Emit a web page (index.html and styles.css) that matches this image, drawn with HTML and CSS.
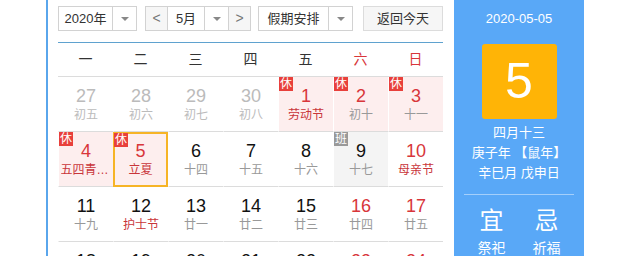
FILE: index.html
```html
<!DOCTYPE html>
<html lang="zh-CN">
<head>
    <meta charset="UTF-8">
    <title>万年历</title>
    <link rel="stylesheet" href="styles.css">
</head>
<body>
    <div class="calendar">
        <div class="main">
            <div class="toolbar">
                <div class="select year-select">
                    <span class="select-text">2020年</span>
                    <span class="select-arrow"></span>
                </div>
                <div class="month-group">
                    <span class="step-button">&lt;</span>
                    <div class="select month-select">
                        <span class="select-text">5月</span>
                        <span class="select-arrow"></span>
                    </div>
                    <span class="step-button">&gt;</span>
                </div>
                <div class="select holiday-select">
                    <span class="select-text">假期安排</span>
                    <span class="select-arrow"></span>
                </div>
                <span class="today-button">返回今天</span>
            </div>

            <div class="week-header">
                <span>一</span><span>二</span><span>三</span><span>四</span><span>五</span>
                <span class="weekend">六</span><span class="weekend">日</span>
            </div>

            <div class="days">
                <div class="day other"><span class="num">27</span><span class="lunar">初五</span></div>
                <div class="day other"><span class="num">28</span><span class="lunar">初六</span></div>
                <div class="day other"><span class="num">29</span><span class="lunar">初七</span></div>
                <div class="day other"><span class="num">30</span><span class="lunar">初八</span></div>
                <div class="day rest red"><i class="badge">休</i><span class="num">1</span><span class="lunar fest">劳动节</span></div>
                <div class="day rest red"><i class="badge">休</i><span class="num">2</span><span class="lunar">初十</span></div>
                <div class="day rest red"><i class="badge">休</i><span class="num">3</span><span class="lunar">十一</span></div>

                <div class="day rest red"><i class="badge">休</i><span class="num">4</span><span class="lunar fest">五四青年节</span></div>
                <div class="day rest red selected"><i class="badge">休</i><span class="num">5</span><span class="lunar fest">立夏</span></div>
                <div class="day"><span class="num">6</span><span class="lunar">十四</span></div>
                <div class="day"><span class="num">7</span><span class="lunar">十五</span></div>
                <div class="day"><span class="num">8</span><span class="lunar">十六</span></div>
                <div class="day work"><i class="badge">班</i><span class="num">9</span><span class="lunar">十七</span></div>
                <div class="day red"><span class="num">10</span><span class="lunar fest">母亲节</span></div>

                <div class="day"><span class="num">11</span><span class="lunar">十九</span></div>
                <div class="day"><span class="num">12</span><span class="lunar fest">护士节</span></div>
                <div class="day"><span class="num">13</span><span class="lunar">廿一</span></div>
                <div class="day"><span class="num">14</span><span class="lunar">廿二</span></div>
                <div class="day"><span class="num">15</span><span class="lunar">廿三</span></div>
                <div class="day red"><span class="num">16</span><span class="lunar">廿四</span></div>
                <div class="day red"><span class="num">17</span><span class="lunar">廿五</span></div>

                <div class="day"><span class="num">18</span><span class="lunar">廿六</span></div>
                <div class="day"><span class="num">19</span><span class="lunar">廿七</span></div>
                <div class="day"><span class="num">20</span><span class="lunar fest">小满</span></div>
                <div class="day"><span class="num">21</span><span class="lunar">廿九</span></div>
                <div class="day"><span class="num">22</span><span class="lunar">三十</span></div>
                <div class="day red"><span class="num">23</span><span class="lunar">闰四月</span></div>
                <div class="day red"><span class="num">24</span><span class="lunar">初二</span></div>
            </div>
        </div>

        <div class="panel">
            <div class="panel-date">2020-05-05</div>
            <div class="panel-day">5</div>
            <div class="panel-lunar">
                <div>四月十三</div>
                <div>庚子年 【鼠年】</div>
                <div>辛巳月 戊申日</div>
            </div>
            <div class="panel-line"></div>
            <div class="panel-yiji">
                <div class="yiji-col">
                    <span class="yiji-title">宜</span>
                    <span class="yiji-item">祭祀</span>
                </div>
                <div class="yiji-col">
                    <span class="yiji-title">忌</span>
                    <span class="yiji-item">祈福</span>
                </div>
            </div>
        </div>
    </div>
</body>
</html>
```

FILE: styles.css
```css
body {
    margin: 0;
    background: #ffffff;
    font-family: 'Liberation Sans', 'Noto Sans CJK SC', sans-serif;
    color: #333;
    height: 256px;
    overflow: hidden;
}

.calendar {
    display: flex;
    margin-left: 46px;
    width: 536px;
    min-height: 256px;
    border-left: 2px solid #5aa6ec;
}

.main {
    width: 385px;
    padding: 6px 11px 0 10px;
}

/* toolbar */
.toolbar {
    display: flex;
    height: 25px;
    padding-bottom: 11px;
    border-bottom: 1px solid #5fa2cf;
}

.select {
    display: flex;
    box-sizing: border-box;
    height: 25px;
    border: 1px solid #d2d2d2;
    font-size: 13px;
    line-height: 23px;
    color: #333;
}

.select-text {
    flex: 1;
    text-align: center;
}

.select-arrow {
    position: relative;
    width: 23px;
    border-left: 1px solid #d2d2d2;
}

.select-arrow::after {
    content: '';
    position: absolute;
    left: 8px;
    top: 10px;
    border-left: 4px solid transparent;
    border-right: 4px solid transparent;
    border-top: 4px solid #888;
}

.year-select {
    width: 79px;
}

.month-group {
    display: flex;
    margin-left: 8px;
}

.month-select {
    width: 60px;
    border-left: none;
    border-right: none;
}

.step-button {
    box-sizing: border-box;
    width: 23px;
    height: 25px;
    border: 1px solid #d2d2d2;
    background: #f6f6f6;
    color: #777;
    font-size: 14px;
    line-height: 22px;
    text-align: center;
}

.holiday-select {
    width: 95px;
    margin-left: 7px;
}

.today-button {
    box-sizing: border-box;
    width: 80px;
    height: 25px;
    margin-left: 10px;
    border: 1px solid #dcdcdc;
    background: #f6f6f6;
    font-size: 13px;
    line-height: 23px;
    text-align: center;
    color: #333;
}

/* week header */
.week-header {
    display: grid;
    grid-template-columns: repeat(7, 55px);
    height: 33px;
    border-bottom: 1px solid #dcdcdc;
    font-size: 14px;
    line-height: 33px;
    text-align: center;
    color: #333;
}

.week-header .weekend {
    color: #d8363a;
}

/* days */
.days {
    display: grid;
    grid-template-columns: repeat(7, 55px);
    grid-auto-rows: 55px;
}

.day {
    position: relative;
    display: flex;
    flex-direction: column;
    align-items: center;
    box-sizing: border-box;
    padding-top: 8px;
    border-bottom: 1px solid #dcdcdc;
    border-left: 1px solid #fff;
}

.num {
    font-size: 18px;
    line-height: 22px;
    color: #111;
}

.lunar {
    max-width: 51px;
    font-size: 12px;
    line-height: 16px;
    color: #999;
    white-space: nowrap;
    overflow: hidden;
    text-overflow: ellipsis;
}

.day.red .num {
    color: #d8363a;
}

.lunar.fest {
    color: #c9353a;
}

.day.other .num,
.day.other .lunar {
    color: #bbb;
}

.day.rest {
    background: #fdeeee;
}

.day.work {
    background: #f4f4f4;
}

.day.selected {
    border: 2px solid #f6b426;
    padding-top: 6px;
}

.badge {
    position: absolute;
    left: 0;
    top: 0;
    width: 14px;
    height: 14px;
    background: #e8403b;
    color: #fff;
    font-style: normal;
    font-size: 12px;
    line-height: 14px;
    text-align: center;
}

.day.selected .badge {
    left: -1px;
    top: -1px;
}

.day.work .badge {
    background: #999;
}

/* right panel */
.panel {
    width: 130px;
    background: #59a8f7;
    color: #fff;
    text-align: center;
}

.panel-date {
    padding-top: 10px;
    font-size: 13px;
    line-height: 18px;
}

.panel-day {
    width: 75px;
    height: 75px;
    margin: 16px auto 0;
    border-radius: 3px;
    background: #ffb406;
    font-size: 50px;
    line-height: 75px;
}

.panel-lunar {
    margin-top: 4px;
    font-size: 13px;
    line-height: 20px;
}

.panel-line {
    height: 1px;
    margin: 11px 10px 0;
    background: rgba(255, 255, 255, 0.45);
}

.panel-yiji {
    display: flex;
    padding: 0 10px;
}

.yiji-col {
    display: flex;
    flex: 1;
    flex-direction: column;
    align-items: center;
}

.yiji-title {
    margin-top: 10px;
    font-size: 24px;
    line-height: 32px;
}

.yiji-item {
    font-size: 14px;
    line-height: 22px;
}
```
